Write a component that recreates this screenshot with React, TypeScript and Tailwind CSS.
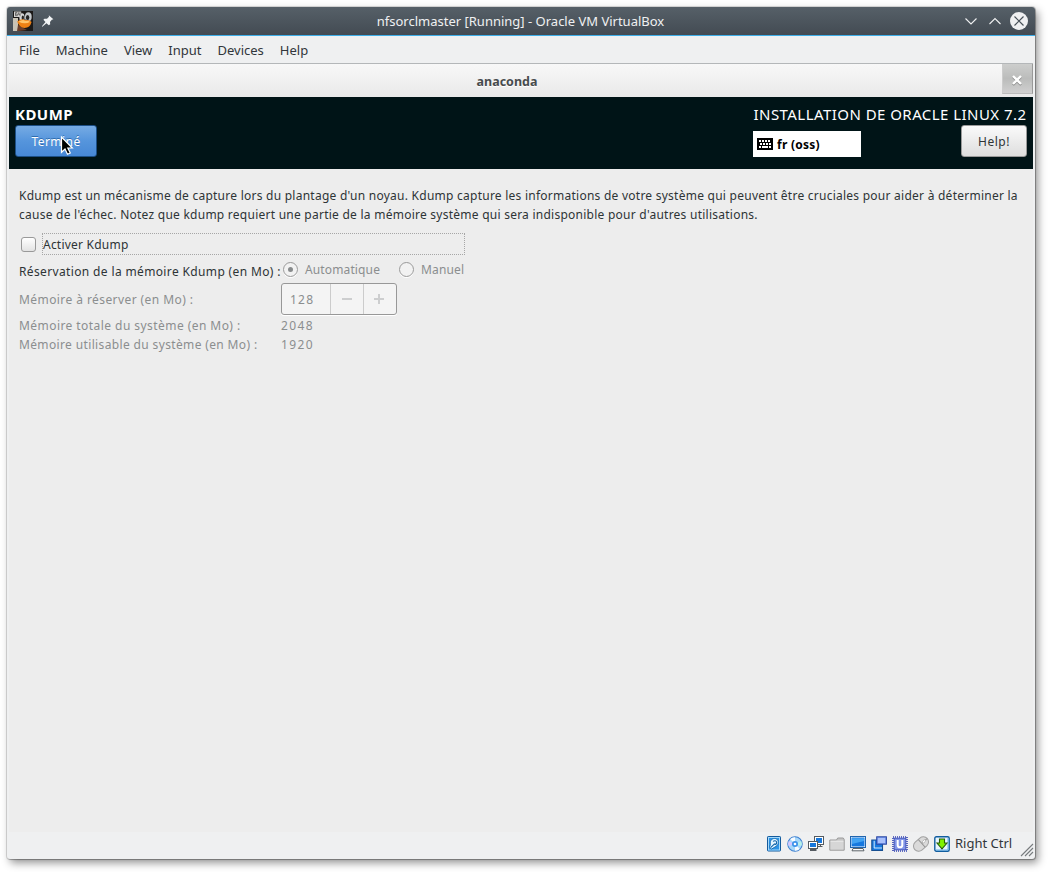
import type { ReactNode } from "react";

const menus = ["File", "Machine", "View", "Input", "Devices", "Help"];

function Icon({ children }: { children: ReactNode }) {
  return (
    <svg width="16" height="16" viewBox="0 0 16 16" className="shrink-0">
      {children}
    </svg>
  );
}

function StatusIcons() {
  return (
    <div className="flex gap-[5px]">
      <Icon>
        <rect x="1.5" y="0.5" width="13" height="14.5" rx="0.8" fill="#2b93e6" stroke="#145a9c" />
        <rect x="2.5" y="1.5" width="11" height="12.5" fill="none" stroke="#a5d9fb" />
        <path d="M4.4 8.5 C3.2 4.5 6.5 1.8 9.8 2.6 C13.4 3.7 13 8.8 10 10.4 L5.6 13 L3.4 11.4 Z" fill="#e4f5ff" stroke="#1670b8" strokeWidth="1" />
        <path d="M4.6 11.6 L8.8 7.6 M7 5.4 Q9.5 3.9 10.7 6 Q11 8.2 8.8 8.6" fill="none" stroke="#0e62a8" strokeWidth="1.1" />
      </Icon>
      <Icon>
        <circle cx="8" cy="8" r="7.2" fill="#a8d8fa" stroke="#3d7fd0" strokeWidth="1.1" />
        <path d="M8 8 L3.2 3 A7 7 0 0 1 8 1.3Z" fill="#f7fbff" />
        <path d="M8 8 L12.8 13 A7 7 0 0 1 8 14.7Z" fill="#f7fbff" />
        <path d="M8 8 L1.6 5 A7 7 0 0 0 1.6 10Z" fill="#d3c8ff" />
        <path d="M8 8 L14.4 5 A7 7 0 0 1 14.4 10Z" fill="#b5f0ea" />
        <circle cx="8" cy="8" r="3" fill="#3a91ea" />
        <circle cx="8" cy="8" r="1.3" fill="#fff" />
      </Icon>
      <Icon>
        <rect x="6.5" y="0.5" width="9" height="8" fill="#fff" stroke="#545b61" />
        <rect x="8" y="2" width="6" height="5" fill="#1677dc" />
        <path d="M12.5 8.5 V10.5 M10 10.5 H14.5" fill="none" stroke="#545b61" strokeWidth="1" />
        <rect x="0.5" y="5.5" width="9" height="7" fill="#fff" stroke="#545b61" />
        <rect x="2" y="7" width="6" height="4" fill="#1677dc" />
        <path d="M2 14 H8.5" stroke="#545b61" strokeWidth="2" />
      </Icon>
      <Icon>
        <path d="M0.8 4 V14.2 H15.2 V3.5 L14.3 2 H8.7 L7.5 4Z" fill="#c5c5c5" stroke="#9b9b9b" />
        <path d="M1.5 5.5 H14.5 V13.5 H1.5Z" fill="#d6d6d6" />
        <path d="M1.5 5.2 H14.5" stroke="#efefef" />
      </Icon>
      <Icon>
        <rect x="0.5" y="0.5" width="15" height="11" fill="#fff" stroke="#2165ad" />
        <rect x="1.5" y="1.5" width="13" height="9" fill="#1678df" />
        <path d="M2 2.3 H14 V5 L2 8Z" fill="#43a4f3" />
        <path d="M3 12.5 H13 L14 14.8 H2Z" fill="#fff" stroke="#4c5359" strokeWidth="0.9" />
      </Icon>
      <Icon>
        <path d="M0.8 4 H11.5 V14.5 H0.8Z" fill="#1678df" stroke="#174f91" strokeWidth="1.1" />
        <path d="M3 12 H11 M3.2 4.8 V12" stroke="#cfe8fb" strokeWidth="1" />
        <rect x="5.7" y="0.8" width="9.7" height="7.4" fill="#7799ef" stroke="#27439f" />
        <rect x="7" y="2" width="7" height="5" fill="#a9c0fb" />
      </Icon>
      <Icon>
        <rect x="1" y="1" width="14" height="14" fill="none" stroke="#3443b0" strokeWidth="1.6" strokeDasharray="1 1" />
        <rect x="2.2" y="2.2" width="11.6" height="11.6" fill="#8296e8" stroke="#4054bd" />
        <path d="M5.7 4 V9.2 Q5.7 11.3 8 11.3 Q10.3 11.3 10.3 9.2 V4" fill="none" stroke="#fff" strokeWidth="2" />
      </Icon>
      <Icon>
        <g transform="rotate(48 8 8)">
          <rect x="2.8" y="-0.3" width="10.4" height="16.6" rx="5.2" fill="#dadada" stroke="#a1a1a1" />
          <path d="M3 7 H13 M8 0 V7" stroke="#969696" strokeWidth="1" />
          <rect x="7" y="2" width="2" height="4" rx="1" fill="#fff" stroke="#9a9a9a" strokeWidth="0.6" />
        </g>
      </Icon>
      <Icon>
        <rect x="0.8" y="0.8" width="14.4" height="14.4" rx="1.5" fill="#e8f5ff" stroke="#125e9f" strokeWidth="1.4" />
        <path d="M2 14 H14 V2" fill="none" stroke="#62afe8" strokeWidth="1" />
        <path d="M5.5 3 H10.5 V7 H13 L8 12.8 L3 7 H5.5Z" fill="#80f300" stroke="#28600b" strokeWidth="1.1" />
      </Icon>
    </div>
  );
}

function Penguin() {
  return (
    <svg width="20" height="20" viewBox="0 0 20 20">
      <rect width="20" height="20" fill="#1b1918" />
      <path d="M0 7 H5 V20 H0Z" fill="#c9c3b5" />
      <path d="M5 14 L14 19 L6 20 H4Z" fill="#6b3f2b" />
      <ellipse cx="9" cy="6.5" rx="2.6" ry="4.3" fill="#d7d9da" />
      <ellipse cx="15.3" cy="5.7" rx="3.4" ry="4.5" fill="#c2c6c9" />
      <ellipse cx="9.8" cy="6.8" rx="1.2" ry="2.3" fill="#222" />
      <ellipse cx="14.6" cy="6.5" rx="1.7" ry="2.6" fill="#242424" />
      <path d="M4.2 10.5 Q9 7 12 9 Q17 8.5 18.6 11 Q17 16.8 11.5 17 Q6.3 16.8 4.2 10.5Z" fill="#ed8014" />
      <path d="M5.5 10.7 Q10 8 12 9.8 Q16 9.5 17 11 Q12 13.8 5.5 10.7Z" fill="#ffc46a" />
      <rect x="1" y="0.5" width="7.2" height="5.5" fill="#d4d3d0" />
      <path d="M4.2 1.5 H2.5 V4.7 H4.3 V3 H2.5 M5.4 1.3 V3.4 H7.2 M7 1.3 V5.2" fill="none" stroke="#555" strokeWidth="0.8" />
    </svg>
  );
}

function TitleBar() {
  return (
    <div className="flex h-[29px] shrink-0 items-center rounded-t-[3px] border-b border-[#3daee9] bg-linear-to-b from-[#566068] to-[#434b53] px-[6px]">
      <Penguin />
      <svg width="14" height="14" viewBox="0 0 14 14" className="ml-[8px]">
        <path d="M7.8 1.2 L12.4 5.2 L10.8 5.8 L9 8 L9.2 10.3 L7.8 11.2 L5.5 9.2 L1.3 12.7 L0.9 12.3 L4.5 8 L2.4 5.8 L3.4 4.8 L6 4.8 L8 2.7Z" fill="#f3f5f6" />
      </svg>
      <div className="flex-1 pl-[23px] text-center text-[13px] leading-[28px] text-[#eff0f1]">
        nfsorclmaster [Running] - Oracle VM VirtualBox
      </div>
      <svg width="66" height="20" viewBox="0 0 66 20">
        <path d="M2.5 7.5 L8 13 L13.5 7.5 M26.5 13 L32 7.5 L37.5 13" fill="none" stroke="#eff0f1" strokeWidth="1.1" />
        <circle cx="56" cy="10" r="9" fill="#eff0f1" />
        <path d="M51.5 5.5 L60.5 14.5 M60.5 5.5 L51.5 14.5" stroke="#475057" strokeWidth="1.2" />
      </svg>
    </div>
  );
}

function InstallerHeader() {
  return (
    <div className="relative flex h-[72px] justify-between bg-[#001417] pt-[7px] pr-[6px] pl-[6px] text-white">
      <div>
        <div className="h-[21px] text-[15px] leading-[20px] font-bold tracking-[0.45px]">KDUMP</div>
        <div className="flex h-[32px] w-[82px] items-center justify-center rounded-[3px] border border-[#1c4f86] bg-linear-to-b from-[#76abe4] via-[#5595dc] to-[#4788d6] pt-[2px] text-[12px] tracking-[0.45px] [text-shadow:0_-1px_#2e6cae]">
          Terminé
        </div>
      </div>
      <div className="w-[274px]">
        <div className="h-[21px] pl-[0.5px] text-[15px] leading-[20px] tracking-[0.45px] whitespace-nowrap">
          INSTALLATION DE ORACLE LINUX 7.2
        </div>
        <div className="flex items-start justify-between">
          <div className="mt-[6px] flex h-[26px] w-[108px] items-center bg-white pl-1 text-[12px] font-bold tracking-[0.25px] text-black">
            <svg width="16" height="12" viewBox="0 0 16 12" className="mr-[4px]" shapeRendering="crispEdges">
              <rect width="16" height="12" rx="1" fill="#000" />
              <path d="M2 3 H14" stroke="#fff" strokeWidth="2" strokeDasharray="2 1" />
              <path d="M3 6 H14" stroke="#fff" strokeWidth="2" strokeDasharray="2 1" />
              <path d="M2 9 H4 M5 9 H11 M12 9 H14" stroke="#fff" strokeWidth="2" />
            </svg>
            <span className="pt-[2px]">fr (oss)</span>
          </div>
          <div className="flex h-[32px] w-[66px] items-center justify-center rounded-[3px] border border-[#9a9a9a] bg-linear-to-b from-[#fafafa] to-[#dedede] pt-[2px] text-[12px] tracking-[0.5px] text-[#2e3436]">
            Help!
          </div>
        </div>
      </div>
      <svg width="14" height="20" viewBox="0 0 14 20" className="absolute top-[39px] left-[51px]">
        <path d="M1.5 1 V16.3 L5 13 L7.5 18.3 L10.3 17 L7.8 12 H12.3Z" fill="#000" stroke="#fff" strokeWidth="1.2" />
      </svg>
    </div>
  );
}

function Radio({ checked = false, label }: { checked?: boolean; label: string }) {
  return (
    <div className="flex items-center gap-[7px] tracking-[0.13px] text-[#8b8e8f]">
      <span className="flex h-[15px] w-[15px] items-center justify-center rounded-full border border-[#999] bg-[#f2f2f2] shadow-[0_1px_#fff]">
        {checked && <span className="h-[5px] w-[5px] rounded-full bg-[#888b8c]" />}
      </span>
      {label}
    </div>
  );
}

function KdumpForm() {
  return (
    <div className="flex-1 bg-[#ededed] pt-[17px] pl-[10px] text-[12px] text-[#2e3436]">
      <div className="leading-[19px] tracking-[0.248px] whitespace-nowrap">
        <p>
          Kdump est un mécanisme de capture lors du plantage d'un noyau. Kdump capture les informations de votre
          système qui peuvent être cruciales pour aider à déterminer la
        </p>
        <p>
          cause de l'échec. Notez que kdump requiert une partie de la mémoire système qui sera indisponible pour
          d'autres utilisations.
        </p>
      </div>
      <div className="mt-[9px] flex h-[22px] items-center pl-[2px]">
        <span className="h-[15px] w-[15px] rounded-[3px] border border-[#999] bg-linear-to-b from-white to-[#e3e3e3]" />
        <span className="ml-[6px] h-[22px] w-[423px] border border-dotted border-[#a6a6a6] pt-px leading-[20px] tracking-[0.22px]">
          Activer Kdump
        </span>
      </div>
      <div className="mt-[4px] flex h-[21px]">
        <div className="w-[264px] pt-[3px] leading-[20px] tracking-[0.36px] whitespace-nowrap">
          Réservation de la mémoire Kdump (en Mo) :
        </div>
        <div className="flex h-[21px] items-center gap-[19px]">
          <Radio checked label="Automatique" />
          <Radio label="Manuel" />
        </div>
      </div>
      <div className="mt-[3px] flex h-[32px] items-center text-[#8b8e8f]">
        <div className="w-[262px] pt-[2px] tracking-[0.42px]">Mémoire à réserver (en Mo) :</div>
        <div className="flex h-[32px] w-[116px] rounded-[3px] border border-[#989898] bg-[#f4f4f4] shadow-[0_1px_#fff]">
          <span className="flex w-[49px] items-center border-r border-[#ccc] pt-[2px] pl-[8px] tracking-[1.2px]">128</span>
          <span className="flex w-[33px] items-center justify-center border-r border-[#ccc] pr-px">
            <span className="h-[2px] w-[10px] bg-[#cdcecf]" />
          </span>
          <span className="flex flex-1 items-center justify-center pr-[2px]">
            <svg width="10" height="10" viewBox="0 0 10 10">
              <path d="M5 0 V10 M0 5 H10" stroke="#cdcecf" strokeWidth="2" />
            </svg>
          </span>
        </div>
      </div>
      <div className="mt-px grid grid-cols-[262px_auto] leading-[19px] text-[#8b8e8f]">
        <span className="tracking-[0.44px]">Mémoire totale du système (en Mo) :</span>
        <span className="tracking-[1.35px]">2048</span>
        <span className="tracking-[0.36px]">Mémoire utilisable du système (en Mo) :</span>
        <span className="tracking-[1.35px]">1920</span>
      </div>
    </div>
  );
}

export default function App() {
  return (
    <div className="h-[872px] w-[1048px] bg-white pt-[7px] pl-[7px] font-['Noto_Sans',sans-serif]">
      <div className="flex h-[852px] w-[1028px] flex-col rounded-[3px] bg-[#eff0f1] shadow-[0_0_0_1px_rgba(0,0,0,0.13),1px_1px_1px_rgba(0,0,0,0.2),3px_4px_8px_rgba(0,0,0,0.42)]">
        <TitleBar />
        <div className="mx-[2px] flex h-[28px] shrink-0 items-center gap-4 border-b border-[#b4b7b9] pt-[2px] pl-[10px] text-[13px] text-[#31363b]">
          {menus.map((m) => (
            <span key={m}>{m}</span>
          ))}
        </div>
        <div className="mx-[2px] flex flex-1 flex-col">
          <div className="flex h-[33px] shrink-0 bg-linear-to-b from-[#f8f8f8] to-[#e9e9e9]">
            <div className="flex-1 pl-[3px] text-center text-[12.5px] leading-[36px] font-bold text-[#474b4d] [text-shadow:0_1px_#fff]">
              anaconda
            </div>
            <div className="flex h-[30px] w-[31px] items-center justify-center border-r border-b border-l border-r-[#999] border-b-[#bbb] border-l-[#ccc] bg-linear-to-b from-[#cdcecd] via-[#bbbcbb] to-[#d0d0d0] pt-[3px] pr-px">
              <svg width="10" height="11" viewBox="0 0 10 11">
                <path d="M1 2 L9 10 M9 2 L1 10" stroke="#898989" strokeWidth="2.4" />
                <path d="M1 1 L9 9 M9 1 L1 9" stroke="#fff" strokeWidth="2.4" />
              </svg>
            </div>
          </div>
          <InstallerHeader />
          <KdumpForm />
        </div>
        <div className="flex h-[27px] shrink-0 items-center justify-end pr-px pb-[3px] text-[13px] text-[#31363b]">
          <StatusIcons />
          <span className="ml-[5px] w-[65px] whitespace-nowrap">Right Ctrl</span>
          <svg width="14" height="14" viewBox="0 0 14 14" className="mt-[11px]">
            <path d="M1 13 L13 1 M5 13 L13 5 M9 13 L13 9" stroke="#777b7e" strokeWidth="1.1" />
          </svg>
        </div>
      </div>
    </div>
  );
}
